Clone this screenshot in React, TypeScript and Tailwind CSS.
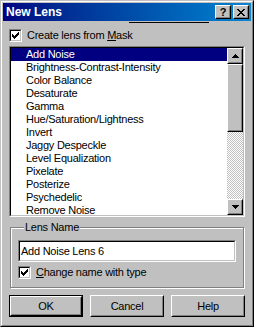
import React from "react";

const items = [
  "Add Noise",
  "Brightness-Contrast-Intensity",
  "Color Balance",
  "Desaturate",
  "Gamma",
  "Hue/Saturation/Lightness",
  "Invert",
  "Jaggy Despeckle",
  "Level Equalization",
  "Pixelate",
  "Posterize",
  "Psychedelic",
  "Remove Noise",
  "Sharpen",
];

function Check() {
  return (
    <div className="w-[13px] h-[13px] border border-t-[#808080] border-l-[#808080] border-r-white border-b-white">
      <div className="w-full h-full border border-t-black border-l-black border-r-[#c0c0c0] border-b-[#c0c0c0] bg-white flex items-center justify-center">
        <svg width="7" height="7" viewBox="0 0 7 7" shapeRendering="crispEdges">
          <path d="M6 0h1v3h-1v1h-1v1h-1v1h-1v1h-1v-1h-1v-1h-1v-3h1v1h1v1h1v-1h1v-1h1z" fill="#000" />
        </svg>
      </div>
    </div>
  );
}

function Raised({ className = "", children }: { className?: string; children?: React.ReactNode }) {
  return (
    <div className={"border border-t-white border-l-white border-r-black border-b-black bg-[#c0c0c0] " + className}>
      <div className="w-full h-full border border-t-[#c0c0c0] border-l-[#c0c0c0] border-r-[#808080] border-b-[#808080] flex items-center justify-center">
        {children}
      </div>
    </div>
  );
}

function Arrow({ down }: { down?: boolean }) {
  return (
    <svg width="7" height="4" viewBox="0 0 7 4" shapeRendering="crispEdges">
      <path d={down ? "M0 0h7v1h-1v1h-1v1h-1v1h-1v-1h-1v-1h-1v-1h-1z" : "M3 0h1v1h1v1h1v1h1v1h-7v-1h1v-1h1v-1h1z"} fill="#000" />
    </svg>
  );
}

function Button({ label, def }: { label: string; def?: boolean }) {
  return (
    <div className={"w-[74px] h-[22px] " + (def ? "border border-black" : "")}>
      <Raised className="w-full h-full">
        <span>{label}</span>
      </Raised>
    </div>
  );
}

export default function App() {
  return (
    <div className="w-[254px] h-[327px] bg-[#c0c0c0] text-black font-['Liberation_Sans',Arial,sans-serif] text-[11px] tracking-[-0.25px] leading-[13px]">
      <div className="w-full h-full border border-t-[#c0c0c0] border-l-[#c0c0c0] border-r-black border-b-black">
        <div className="w-full h-full border border-t-white border-l-white border-r-[#808080] border-b-[#808080] p-px flex flex-col">
          {/* Title bar */}
          <div className="h-[18px] flex items-center pl-[3px] pr-[2px] bg-linear-to-r from-[#000080] to-[#1084d0]">
            <span className="flex-1 text-white font-bold text-[12px] tracking-normal">New Lens</span>
            <Raised className="w-[16px] h-[14px]">
              <span className="font-bold text-[11px] leading-none tracking-normal">?</span>
            </Raised>
            <Raised className="w-[16px] h-[14px] ml-[2px]">
              <svg width="8" height="7" viewBox="0 0 8 7" shapeRendering="crispEdges">
                <path d="M0 0h2v1h1v1h2v-1h1v-1h2v1h-1v1h-1v1h-1v1h1v1h1v1h1v1h-2v-1h-1v-1h-2v1h-1v1h-2v-1h1v-1h1v-1h1v-1h-1v-1h-1v-1h-1z" fill="#000" />
              </svg>
            </Raised>
          </div>

          <div className="px-[6px] flex flex-col">
            <div className="h-px w-[80px] ml-[120px] mt-px bg-black" />

            {/* Create lens checkbox */}
            <div className="flex items-center mt-[6px] h-[13px]">
              <Check />
              <span className="ml-[5px]">
                Create lens from <span className="underline">M</span>ask
              </span>
            </div>

            {/* Listbox */}
            <div className="mt-[4px] h-[171px] border border-t-[#808080] border-l-[#808080] border-r-white border-b-white">
              <div className="w-full h-full border border-t-black border-l-black border-r-[#c0c0c0] border-b-[#c0c0c0] bg-white flex">
                <div className="flex-1 overflow-hidden">
                  {items.map((it, i) => (
                    <div
                      key={it}
                      className={"h-[13px] pl-[15px] whitespace-nowrap " + (i === 0 ? "bg-[#000080] text-white" : "")}
                    >
                      {it}
                    </div>
                  ))}
                </div>
                <div className="w-[16px] flex flex-col bg-[repeating-conic-gradient(#c0c0c0_0_25%,#fff_0_50%)] bg-size-[2px_2px]">
                  <Raised className="w-[16px] h-[16px]">
                    <Arrow />
                  </Raised>
                  <Raised className="w-[16px] h-[68px]" />
                  <div className="flex-1" />
                  <Raised className="w-[16px] h-[16px]">
                    <Arrow down />
                  </Raised>
                </div>
              </div>
            </div>

            {/* Lens Name group */}
            <fieldset className="mt-[4px] mx-px border border-[#808080] shadow-[inset_1px_1px_0_#fff,1px_1px_0_#fff] pl-[7px] pr-[7px] pt-[6px] pb-[8px]">
              <legend className="ml-[6px] px-px bg-[#c0c0c0]">Lens Name</legend>
              <div className="h-[22px] border border-t-[#808080] border-l-[#808080] border-r-white border-b-white">
                <div className="w-full h-full border border-t-black border-l-black border-r-[#c0c0c0] border-b-[#c0c0c0] bg-white flex items-center pl-px">
                  Add Noise Lens 6
                </div>
              </div>
              <div className="flex items-center mt-[4px] h-[13px]">
                <Check />
                <span className="ml-[5px]">
                  <span className="underline">C</span>hange name with type
                </span>
              </div>
            </fieldset>

            {/* Buttons */}
            <div className="flex gap-[7px] mt-[7px]">
              <Button label="OK" def />
              <Button label="Cancel" />
              <Button label="Help" />
            </div>
          </div>
        </div>
      </div>
    </div>
  );
}
